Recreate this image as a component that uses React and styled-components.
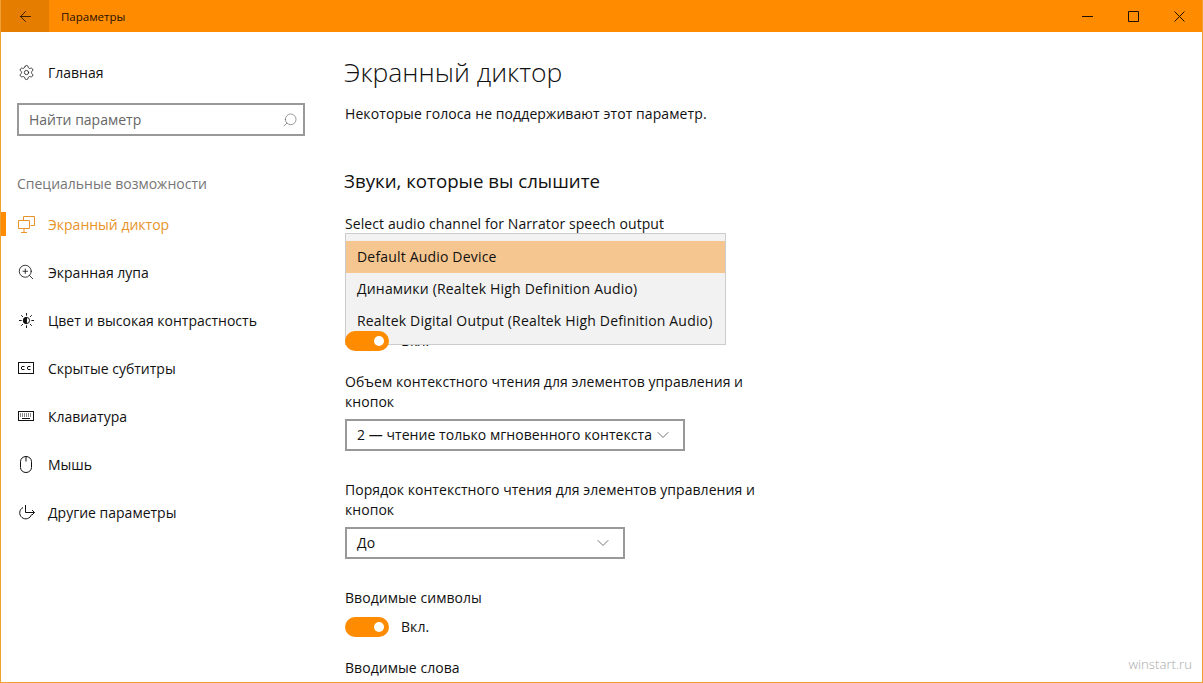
import styled, { createGlobalStyle } from "styled-components";
import { ArrowLeft, ChevronDown, Search, Settings, ZoomIn } from "lucide-react";

const GlobalStyle = createGlobalStyle`
  html, body {
    margin: 0;
    padding: 0;
    background: #fff;
  }
  body {
    font-family: "Open Sans", "Noto Sans", sans-serif;
    color: #111;
  }
`;

const NarratorIcon = () => (
  <svg width="17" height="17" viewBox="0 0 17 17" fill="none" stroke="currentColor" strokeWidth="1">
    <path d="M5.5 4.5V.5h11v9h-4" />
    <path d="M.5 4.5h11v8H.5z" />
    <path d="M6 12.5v3.500M3 16.500h6" />
  </svg>
);

const SunIcon = () => (
  <svg width="15" height="15" viewBox="0 0 17 17" fill="none" stroke="currentColor" strokeWidth="1.100">
    <circle cx="8.500" cy="8.500" r="3.500" />
    <path d="M8.500 5a3.500 3.500 0 0 0 0 7z" fill="currentColor" />
    <path d="M8.500 0v3M8.500 14v3M0 8.500h3M14 8.500h3M2.500 2.500l2 2M12.500 12.500l2 2M14.500 2.500l-2 2M4.500 12.500l-2 2" />
  </svg>
);

const CaptionIcon = () => (
  <svg width="16" height="12" viewBox="0 0 16 12" fill="none" stroke="currentColor" strokeWidth="1">
    <rect x=".5" y=".5" width="15" height="11" />
    <path d="M6.500 4.500h-2.500l-.5.500v2l.5.500h2.500M12.500 4.500h-2.500l-.5.500v2l.5.500h2.500" />
  </svg>
);

const KeyboardIcon = () => (
  <svg width="16" height="10" viewBox="0 0 16 10" fill="none" stroke="currentColor" strokeWidth="1">
    <rect x=".5" y=".5" width="15" height="9" />
    <path d="M2 3h12M2 5h12" strokeDasharray="1 1" />
    <path d="M4 7.500h8" />
  </svg>
);

const MouseIcon = () => (
  <svg width="12" height="17" viewBox="0 0 12 17" fill="none" stroke="currentColor" strokeWidth="1">
    <path d="M.5 5.500a5.500 5 0 0 1 11 0v6a5.500 5 0 0 1-11 0z" />
    <path d="M6 .5v5" />
  </svg>
);

const OtherIcon = () => (
  <svg width="17" height="17" viewBox="0 0 17 17" fill="none" stroke="currentColor" strokeWidth="1">
    <path d="M5 3.500a6 6 0 1 0 8.500 7" />
    <path d="M7.500 1v7.500h9" />
    <path d="M14 6l2.500 2.500-2.500 2.500" />
  </svg>
);

const CaptionGlyphs = {
  min: "M0 5.500h11",
  max: "M.5.5h10v10H.5z",
  close: "M.5.5l10 10M10.500.5l-10 10",
};

const WindowGlyph = ({ d }) => (
  <svg width="11" height="11" viewBox="0 0 11 11" fill="none" stroke="currentColor" strokeWidth="1">
    <path d={d} />
  </svg>
);

const navItems = [
  { label: "Экранный диктор", icon: <NarratorIcon />, active: true },
  { label: "Экранная лупа", icon: <ZoomIn size={18} strokeWidth={1.1} /> },
  { label: "Цвет и высокая контрастность", icon: <SunIcon /> },
  { label: "Скрытые субтитры", icon: <CaptionIcon /> },
  { label: "Клавиатура", icon: <KeyboardIcon /> },
  { label: "Мышь", icon: <MouseIcon /> },
  { label: "Другие параметры", icon: <OtherIcon /> },
];

const audioOptions = [
  "Default Audio Device",
  "Динамики (Realtek High Definition Audio)",
  "Realtek Digital Output (Realtek High Definition Audio)",
];

const App = () => {
  return (
    <Window>
      <GlobalStyle />
      <TitleBar>
        <BackButton>
          <ArrowLeft size={17} strokeWidth={1.2} />
        </BackButton>
        <TitleText>Параметры</TitleText>
        <WindowButtons>
          <WindowButton>
            <WindowGlyph d={CaptionGlyphs.min} />
          </WindowButton>
          <WindowButton>
            <WindowGlyph d={CaptionGlyphs.max} />
          </WindowButton>
          <WindowButton>
            <WindowGlyph d={CaptionGlyphs.close} />
          </WindowButton>
        </WindowButtons>
      </TitleBar>
      <Body>
        <Sidebar>
          <HomeRow>
            <IconSlot>
              <Settings size={17} strokeWidth={1.1} />
            </IconSlot>
            Главная
          </HomeRow>
          <SearchBox>
            Найти параметр
            <SearchIcon>
              <Search size={16} strokeWidth={1} />
            </SearchIcon>
          </SearchBox>
          <SectionTitle>Специальные возможности</SectionTitle>
          <NavList>
            {navItems.map((item) => (
              <NavRow key={item.label} $active={item.active}>
                <IconSlot>{item.icon}</IconSlot>
                {item.label}
              </NavRow>
            ))}
          </NavList>
        </Sidebar>
        <Main>
          <PageTitle>Экранный диктор</PageTitle>
          <Note>Некоторые голоса не поддерживают этот параметр.</Note>
          <SectionHeading>Звуки, которые вы слышите</SectionHeading>
          <AudioField>
            <Label>Select audio channel for Narrator speech output</Label>
            <Combo $width={380} $gap={7} />
            <Popup>
              {audioOptions.map((option, index) => (
                <PopupItem key={option} $selected={index === 0}>
                  {option}
                </PopupItem>
              ))}
            </Popup>
          </AudioField>
          <ToggleRow $gap={58}>
            <Toggle />
            Вкл.
          </ToggleRow>
          <Label $gap={21}>
            Объем контекстного чтения для элементов управления и
            <br />
            кнопок
          </Label>
          <Combo $width={340} $gap={7}>
            2 — чтение только мгновенного контекста
            <ChevronDown size={20} strokeWidth={0.9} color="#444" />
          </Combo>
          <Label $gap={29}>
            Порядок контекстного чтения для элементов управления и
            <br />
            кнопок
          </Label>
          <Combo $width={280} $gap={7}>
            До
            <ChevronDown size={20} strokeWidth={0.9} color="#444" />
          </Combo>
          <Label $gap={29}>Вводимые символы</Label>
          <ToggleRow $gap={9}>
            <Toggle />
            Вкл.
          </ToggleRow>
          <Label $gap={21}>Вводимые слова</Label>
        </Main>
        <Watermark>winstart.ru</Watermark>
      </Body>
    </Window>
  );
};

export default App;

const Window = styled.div`
  box-sizing: border-box;
  display: flex;
  flex-direction: column;
  width: 1203px;
  height: 683px;
  overflow: hidden;
  border: 1px solid #f0a030;
  border-top: 0;
  background: #fff;
`;

const TitleBar = styled.header`
  display: flex;
  align-items: center;
  flex: 0 0 32px;
  background: #ff8c00;
  color: #1f1000;
`;

const BackButton = styled.div`
  display: flex;
  align-items: center;
  justify-content: center;
  width: 48px;
  height: 32px;
  background: #e57e00;
`;

const TitleText = styled.div`
  margin-left: 12px;
  font-size: 11.5px;
`;

const WindowButtons = styled.div`
  display: flex;
  margin-left: auto;
`;

const WindowButton = styled.div`
  display: flex;
  align-items: center;
  justify-content: center;
  width: 46px;
  height: 32px;
`;

const Body = styled.div`
  position: relative;
  display: flex;
  flex: 1;
  min-height: 0;
`;

const Sidebar = styled.nav`
  flex: 0 0 344px;
  font-size: 14px;
`;

const IconSlot = styled.span`
  display: flex;
  align-items: center;
  justify-content: center;
  flex: 0 0 18px;
  margin: 0 13px 0 16px;
`;

const HomeRow = styled.div`
  display: flex;
  align-items: center;
  height: 24px;
  margin-top: 28px;
`;

const SearchBox = styled.div`
  position: relative;
  box-sizing: border-box;
  display: flex;
  align-items: center;
  width: 288px;
  height: 33px;
  margin: 19px 0 0 16px;
  padding-left: 10px;
  border: 2px solid #999;
  color: #666;
`;

const SearchIcon = styled.span`
  display: flex;
  margin-left: auto;
  margin-right: 5px;
  color: #666;
  transform: scaleX(-1);
`;

const SectionTitle = styled.div`
  margin: 38px 0 0 16px;
  height: 20px;
  line-height: 20px;
  color: #767676;
`;

const NavList = styled.div`
  margin-top: 6px;
`;

const NavRow = styled.div`
  position: relative;
  display: flex;
  align-items: center;
  height: 48px;
  color: ${(props) => (props.$active ? "#e8932a" : "#111")};

  &::before {
    content: "";
    display: ${(props) => (props.$active ? "block" : "none")};
    position: absolute;
    left: -1px;
    top: 12px;
    width: 6px;
    height: 24px;
    background: #ff8c00;
  }
`;

const Main = styled.main`
  flex: 1;
  padding-top: 20px;
  margin-left: -1px;
  font-size: 14px;
  line-height: 20px;
  letter-spacing: 0.05px;
`;

const PageTitle = styled.h1`
  margin: 0;
  font-size: 26.5px;
  font-weight: 300;
  line-height: 40px;
  letter-spacing: 0;
`;

const Note = styled.p`
  margin: 12px 0 0 1px;
  letter-spacing: 0.09px;
`;

const SectionHeading = styled.h2`
  margin: 43px 0 0;
  font-size: 18.7px;
  font-weight: 400;
  line-height: 28px;
  letter-spacing: 0;
`;

const AudioField = styled.div`
  position: relative;
  margin: 19px 0 0 1px;
`;

const Label = styled.div`
  margin-top: ${(props) => props.$gap || 0}px;
  margin-left: ${(props) => (props.$gap ? 1 : 0)}px;

  ${AudioField} > & {
    letter-spacing: 0.09px;
  }
`;

const Combo = styled.div`
  box-sizing: border-box;
  display: flex;
  align-items: center;
  justify-content: space-between;
  width: ${(props) => props.$width}px;
  height: 32px;
  margin: ${(props) => props.$gap}px 0 0 1px;
  padding: 0 10px;
  border: 2px solid #999;

  ${AudioField} > & {
    margin-left: 0;
  }
`;

const Popup = styled.div`
  position: absolute;
  top: 19px;
  left: 0;
  box-sizing: border-box;
  width: 381px;
  padding: 7px 0;
  border: 1px solid #ccc;
  background: #f2f2f2;
  letter-spacing: 0.18px;
`;

const PopupItem = styled.div`
  display: flex;
  align-items: center;
  height: 32px;
  padding-left: 11px;
  background: ${(props) => (props.$selected ? "#f5c68f" : "transparent")};
`;

const ToggleRow = styled.div`
  display: flex;
  align-items: center;
  gap: 12px;
  height: 20px;
  margin: ${(props) => props.$gap}px 0 0 1px;
`;

const Toggle = styled.span`
  position: relative;
  width: 44px;
  height: 20px;
  border-radius: 10px;
  background: #ff8c00;

  &::after {
    content: "";
    position: absolute;
    top: 5px;
    right: 5px;
    width: 10px;
    height: 10px;
    border-radius: 50%;
    background: #fff;
  }
`;

const Watermark = styled.div`
  position: absolute;
  right: 10px;
  bottom: 9px;
  font-size: 13.2px;
  font-weight: 300;
  color: #a8a8a8;
`;
